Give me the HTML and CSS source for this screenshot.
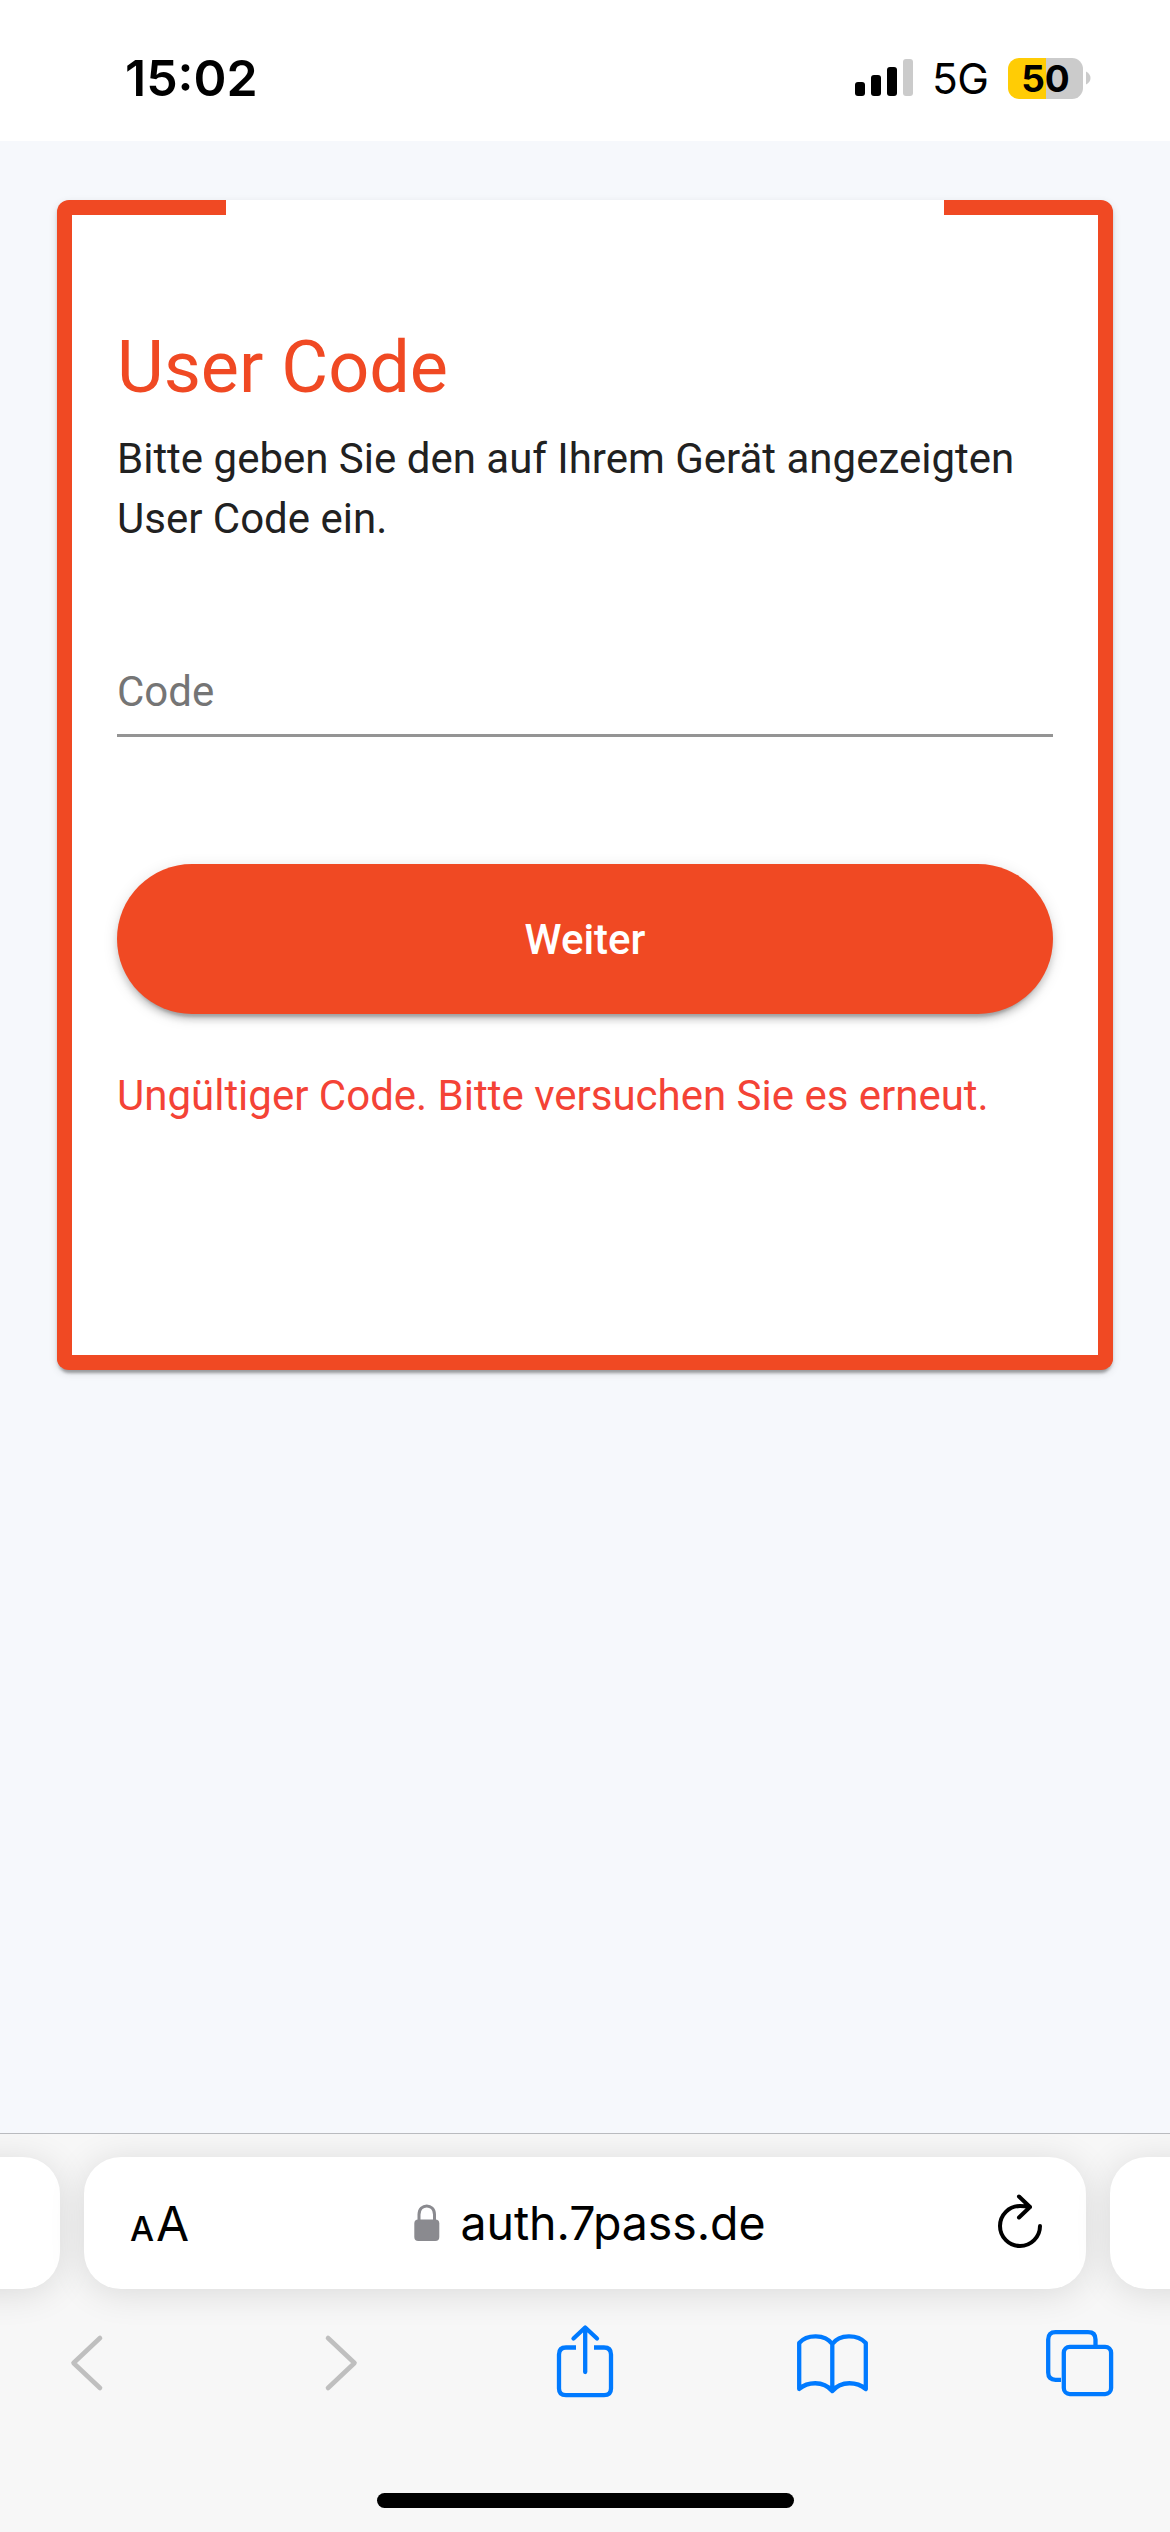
FILE: index.html
```html
<!DOCTYPE html>
<html lang="de">
<head>
<meta charset="utf-8">
<title>User Code</title>
<link rel="stylesheet" href="styles.css">
</head>
<body>
<header class="status">
  <span class="time">15:02</span>
  <div class="indicators">
    <svg class="signal" width="58" height="38" viewBox="0 0 58 38">
      <rect x="0" y="23" width="10" height="14" rx="3"/>
      <rect x="16" y="16" width="10" height="21" rx="3"/>
      <rect x="32" y="8" width="10" height="29" rx="3"/>
      <rect x="48" y="0" width="10" height="37" rx="3" fill="#cbcbcb"/>
    </svg>
    <span class="network">5G</span>
    <span class="battery">50</span>
    <svg class="battery-tip" width="5" height="14" viewBox="0 0 5 14"><path d="M0 0.5Q4.500 3 4.500 7T0 13.500Z" fill="#cbcbcb"/></svg>
  </div>
</header>
<main class="page">
  <section class="card">
    <h1 class="title">User Code</h1>
    <p class="intro">Bitte geben Sie den auf Ihrem Gerät angezeigten User Code ein.</p>
    <input class="code" type="text" placeholder="Code">
    <button class="submit" type="button">Weiter</button>
    <p class="error">Ungültiger Code. Bitte versuchen Sie es erneut.</p>
  </section>
</main>
<footer class="browser">
  <div class="tabs">
    <div class="tab"></div>
    <div class="address">
      <span class="reader"><span class="small-a">A</span><span class="large-a">A</span></span>
      <div class="url">
        <svg width="26" height="38" viewBox="0 0 26 38">
          <path d="M5 17V10.500C5 -1 20.500 -1 20.500 10.500V17" fill="none" stroke="#8a8a8f" stroke-width="3"/>
          <rect x="0.300" y="15.500" width="25" height="21.500" rx="4" fill="#8a8a8f"/>
        </svg>
        <span class="host">auth.7pass.de</span>
      </div>
      <svg class="reload" width="48" height="56" viewBox="0 0 48 56" fill="none" stroke="#000" stroke-width="4" stroke-linecap="round" stroke-linejoin="round">
        <path d="M44 30A20 20 0 1 1 24 10Q29 10 34 11M23 0.500L34 11L23 21.500" transform="translate(0 2)"/>
      </svg>
    </div>
    <div class="tab"></div>
  </div>
  <nav class="toolbar">
    <svg class="back" width="36" height="80" viewBox="0 0 36 80"><path d="M31 15L4.500 40L31 65"/></svg>
    <svg class="forward" width="36" height="80" viewBox="0 0 36 80"><path d="M5 15L31.500 40L5 65"/></svg>
    <svg class="share" width="60" height="80" viewBox="0 0 60 80"><path class="butt" d="M21 24.500H11Q4 24.500 4 31.500V65.500Q4 72.200 11 72.200H49Q56 72.200 56 65.500V31.500Q56 24.500 49 24.500H39"/><path d="M30.200 49V5M18.500 15.500L30.200 4.500L42 15.500"/></svg>
    <svg class="book" width="75" height="80" viewBox="0 0 75 80"><path d="M37.300 21V68M37.300 21C30 11 12 11 4.200 20V66C12 59 28 57 37.300 68C46.500 57 62.500 59 70.800 66V20C62.500 11 44.500 11 37.300 21Z"/></svg>
    <svg class="windows" width="72" height="80" viewBox="0 0 72 80"><path class="butt" d="M17 56.800H11.500Q4.200 56.800 4.200 49.500V16.500Q4.200 9.200 11.500 9.200H44Q51.500 9.200 51.500 16.500V23"/><rect x="19.800" y="23.800" width="47.300" height="47.300" rx="6"/></svg>
  </nav>
  <div class="home"></div>
</footer>
</body>
</html>
```
FILE: styles.css
```css
* { box-sizing: border-box; }
body {
  margin: 0;
  width: 1170px;
  height: 2532px;
  display: flex;
  flex-direction: column;
  overflow: hidden;
  background: #f6f8fc;
  font-family: Roboto, "Liberation Sans", sans-serif;
}
.status {
  height: 141px;
  padding: 15px 79px 0 125px;
  display: flex;
  justify-content: space-between;
  align-items: center;
  background: #fff;
  font-family: Inter, sans-serif;
  color: #000;
}
.time { font-size: 50px; font-weight: 600; letter-spacing: 0; }
.indicators { display: flex; align-items: center; }
.network { margin-left: 19px; width: 76px; padding-top: 1px; font-size: 42.500px; letter-spacing: -0.5px; }
.battery {
  width: 75px;
  height: 41px;
  border-radius: 11px;
  background: linear-gradient(90deg, #ffcc05 38px, #cbcbcb 38px);
  font-size: 37px;
  font-weight: 700;
  line-height: 41px;
  text-align: center;
}
.battery-tip { margin-left: 3px; }
.page { flex: 1; padding: 59px 57px 0; }
.card {
  height: 1170px;
  padding: 132px 45px 0;
  border: 15px solid #f04923;
  border-top: 0;
  border-radius: 12px;
  background:
    linear-gradient(#f04923, #f04923) left top / 154px 15px no-repeat,
    linear-gradient(#f04923, #f04923) right top / 154px 15px no-repeat,
    #fff;
  box-shadow: 0 6px 3px -3px rgba(0,0,0,.2), 0 3px 3px rgba(0,0,0,.14), 0 3px 9px rgba(0,0,0,.12);
}
.title { margin: 0; font-size: 72px; line-height: 72px; font-weight: 400; color: #f04923; }
.intro, .error { margin: 0; font-size: 42px; line-height: 60px; }
.intro { margin-top: 25px; color: #212121; }
.code {
  display: block;
  width: 100%;
  height: 89px;
  margin-top: 99px;
  padding: 0;
  border: 0;
  border-bottom: 3px solid #949494;
  outline: 0;
  background: none;
  font: 42px Roboto, sans-serif;
}
.code::placeholder { color: #757575; opacity: 1; }
.submit {
  display: block;
  width: 100%;
  height: 150px;
  margin-top: 127px;
  padding: 1px 0 0;
  border: 0;
  border-radius: 75px;
  background: #f04923;
  box-shadow: 0 9px 3px -6px rgba(0,0,0,.2), 0 6px 6px rgba(0,0,0,.14), 0 3px 15px rgba(0,0,0,.12);
  color: #fff;
  font: 500 42px Roboto, sans-serif;
}
.error { margin-top: 52px; color: #f44336; }
.browser {
  height: 399px;
  border-top: 1px solid #b9bbbf;
  background: #f7f7f7;
  font-family: Inter, sans-serif;
  overflow: hidden;
}
.tabs { margin: 23px -60px 0; display: grid; grid-template-columns: 120px 1002px 120px; gap: 24px; }
.tab, .address { height: 132px; border-radius: 37px; background: #fff; box-shadow: 0 4px 36px rgba(0,0,0,.12); }
.address { display: grid; grid-template-columns: 1fr auto 1fr; align-items: center; padding: 0 42px 0 46px; }
.reader { display: flex; align-items: baseline; gap: 2px; }
.small-a { font-size: 34px; font-weight: 500; }
.large-a { font-size: 48px; }
.url { display: flex; align-items: center; gap: 21px; padding-left: 5px; }
.host { font-size: 46.500px; letter-spacing: -0.1px; white-space: nowrap; }
.reload { justify-self: end; margin-top: -2px; }
.toolbar {
  display: flex;
  margin-top: 34px;
  padding-left: 69px;
  fill: none;
  stroke: #007aff;
  stroke-width: 4.300;
  stroke-linecap: round;
  stroke-linejoin: round;
}
.butt { stroke-linecap: butt; }
.back, .forward { stroke: #bfbfbf; stroke-width: 4.600; }
.forward { margin-left: 218px; }
.share { margin-left: 196px; }
.book { margin-left: 180px; }
.windows { margin-left: 174px; }
.home { width: 417px; height: 15px; margin: 90px auto 0; border-radius: 8px; background: #000; }
```
